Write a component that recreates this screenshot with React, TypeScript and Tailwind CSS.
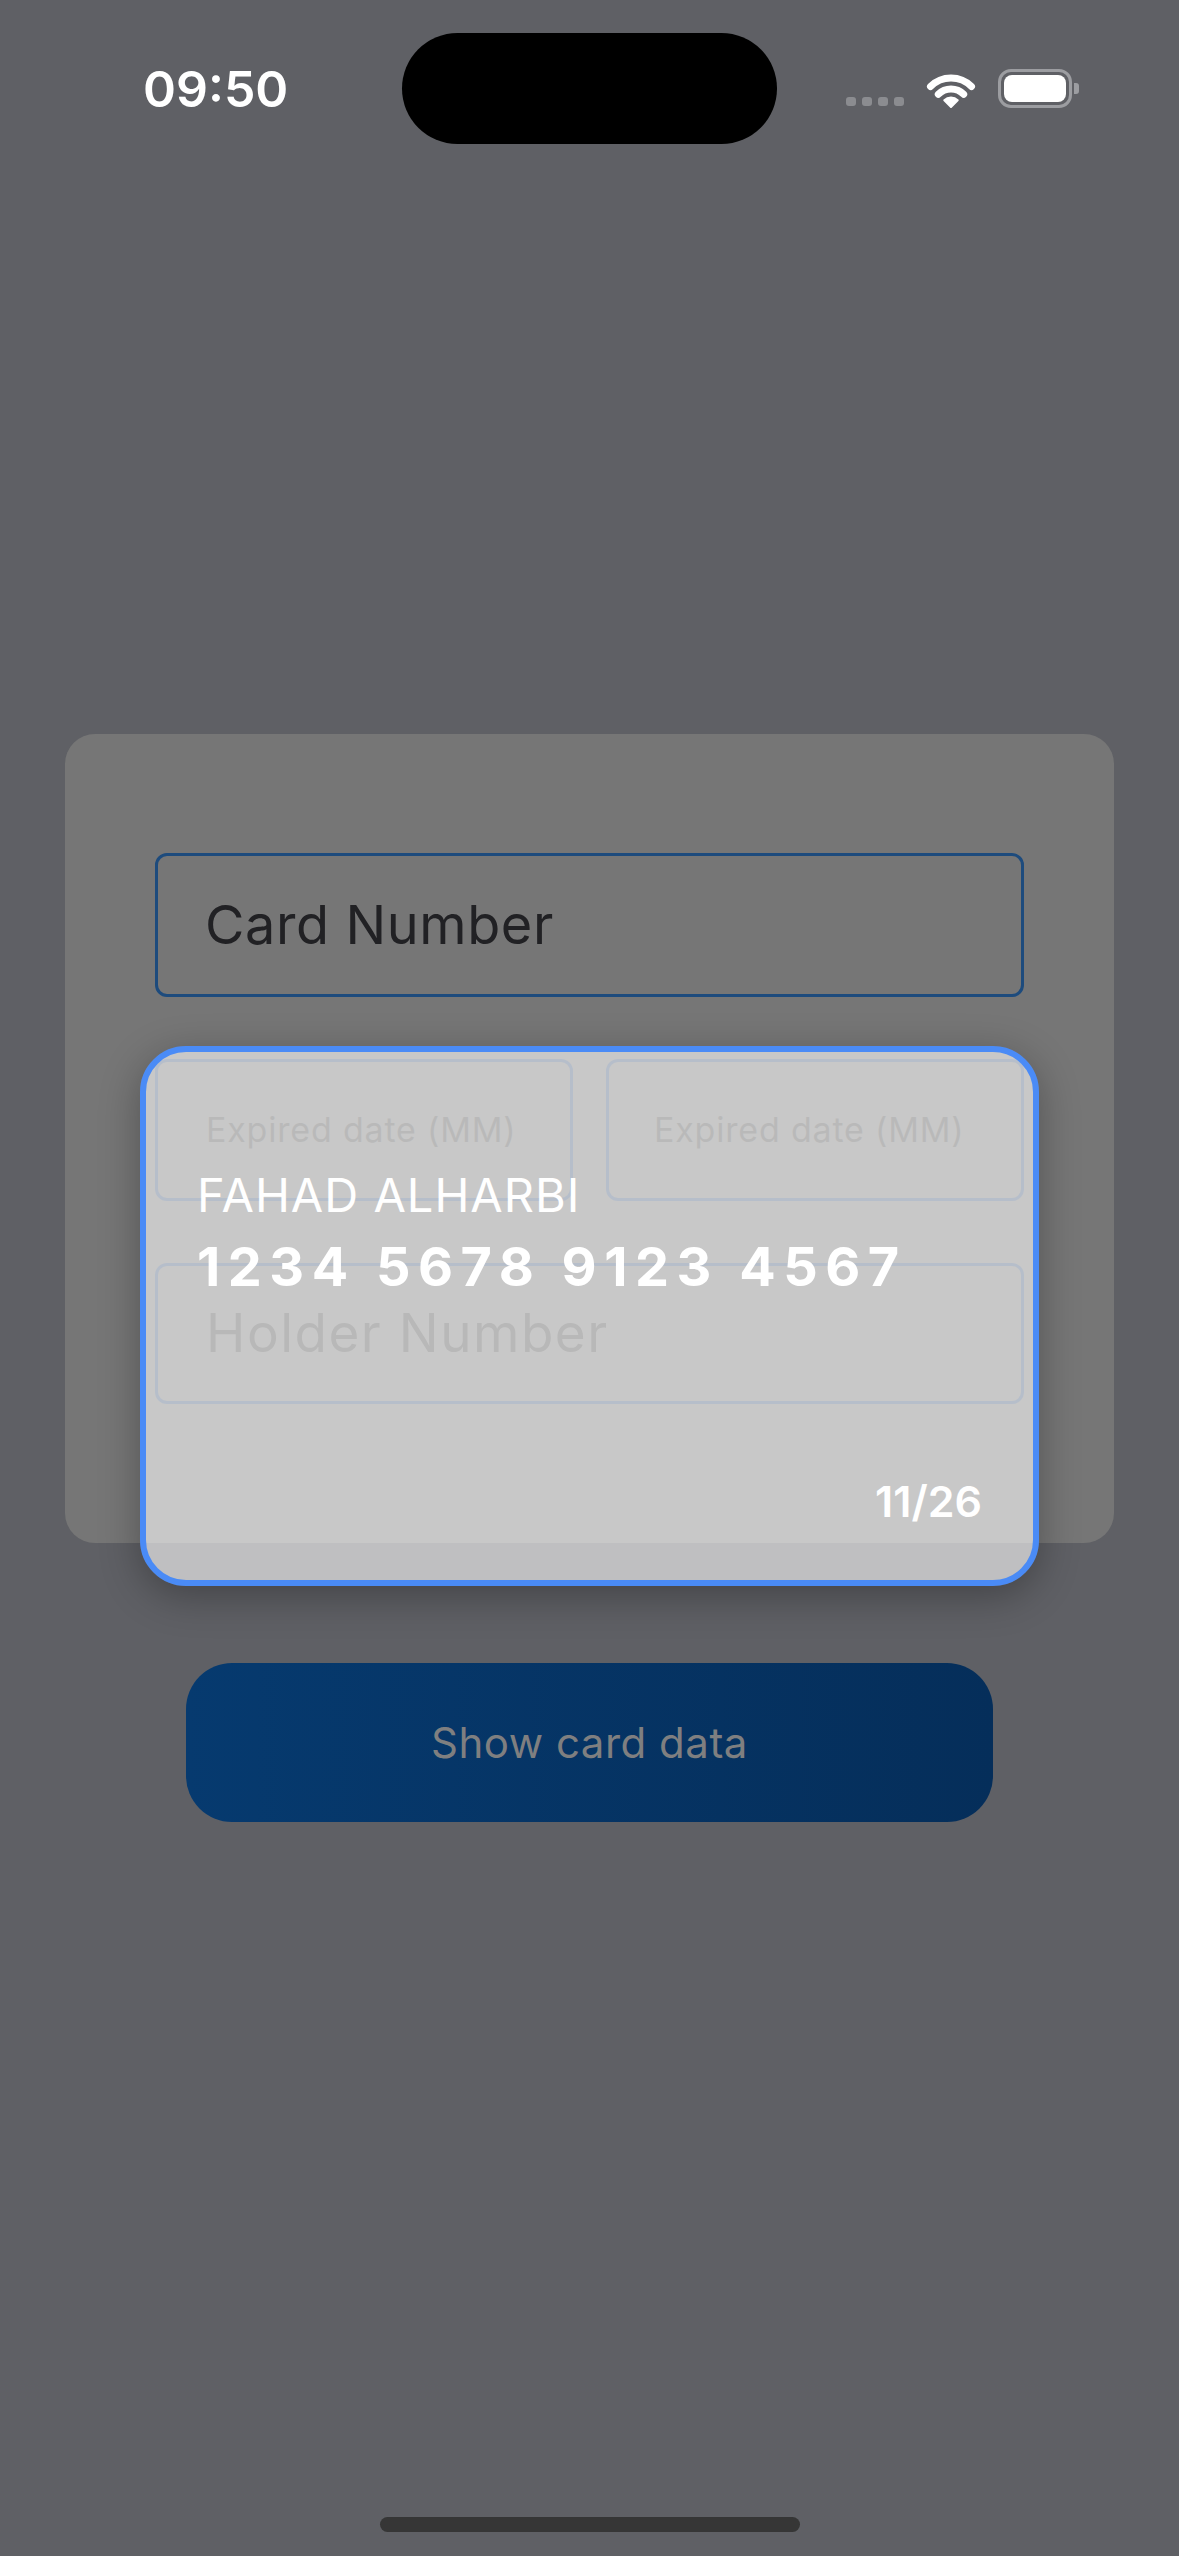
import React from 'react';

const font = { fontFamily: 'Inter, "Noto Sans", sans-serif' };

function WifiIcon() {
  // three rings + fan, drawn around the bottom point
  return (
    <svg width="50" height="36" viewBox="0 0 50 36" fill="none">
      <path d="M4.5 14.5 A29 29 0 0 1 45.5 14.5" stroke="white" strokeWidth="7" strokeLinecap="round" />
      <path d="M12.3 22.3 A18 18 0 0 1 37.7 22.3" stroke="white" strokeWidth="7" strokeLinecap="round" />
      <path d="M25 35 L18.3 28.3 A9.5 9.5 0 0 1 31.7 28.3 Z" fill="white" stroke="white" strokeWidth="2" strokeLinejoin="round" />
    </svg>
  );
}

function StatusBar() {
  return (
    <div className="flex items-center h-[111px] mt-[33px]">
      <div className="w-[402px] pl-[143px]">
        <span className="text-[50px] leading-[50px] font-semibold text-white" style={font}>
          09:50
        </span>
      </div>
      <div className="w-[375px] h-[111px] rounded-full bg-black" />
      <div className="flex-1 h-[39px] flex items-end pl-[69px]">
        <div className="flex gap-[6px] mb-[2px]">
          <div className="w-[10px] h-[9px] rounded-[3px] bg-[#8b8c90]" />
          <div className="w-[10px] h-[9px] rounded-[3px] bg-[#8b8c90]" />
          <div className="w-[10px] h-[9px] rounded-[3px] bg-[#8b8c90]" />
          <div className="w-[10px] h-[9px] rounded-[3px] bg-[#8b8c90]" />
        </div>
        <div className="ml-[22px]">
          <WifiIcon />
        </div>
        <div className="ml-[22px] flex items-center">
          <div className="w-[74px] h-[39px] rounded-[13px] border-[3px] border-[#9c9da1] p-[3px]">
            <div className="w-full h-full rounded-[8px] bg-white" />
          </div>
          <div className="w-[5px] h-[11px] ml-[2px] rounded-r-[3px] bg-[#9c9da1]" />
        </div>
      </div>
    </div>
  );
}

function Field({ label, className, textClass }: { label: string; className: string; textClass: string }) {
  return (
    <div className={`flex items-center rounded-[12px] ${className}`}>
      <span className={textClass} style={font}>
        {label}
      </span>
    </div>
  );
}

function CardPreview() {
  return (
    <div className="absolute left-[75px] top-[312px] w-[899px] h-[540px] rounded-[46px] border-[6px] border-[#4a8bf6] bg-white/60 shadow-[0_10px_40px_rgba(0,0,0,0.3)] flex flex-col pt-[119px] px-[51px] pb-[57px]" style={font}>
      <div className="text-[47px] leading-[47px] text-white tracking-[1px]">FAHAD ALHARBI</div>
      <div className="mt-[22px] text-[54px] leading-[54px] font-bold text-white tracking-[7.5px]">1234 5678 9123 4567</div>
      <div className="mt-auto self-end text-[43px] leading-[43px] font-semibold text-white">11/26</div>
    </div>
  );
}

export default function App() {
  return (
    <div className="w-[1179px] h-[2556px] bg-[#5f6065] flex flex-col overflow-hidden">
      <StatusBar />

      <div className="relative mx-[65px] mt-[590px] h-[809px] rounded-[30px] bg-[#767676] pt-[119px] px-[90px]">
        <Field
          label="Card Number"
          className="h-[144px] border-[3px] border-[#1d4b7d] pl-[47px]"
          textClass="text-[54px] leading-[54px] text-[#212124] tracking-[0.6px]"
        />
        <div className="grid grid-cols-2 gap-[33px] mt-[62px]">
          <Field
            label="Expired date (MM)"
            className="h-[142px] border-[3px] border-[#4a5e7c] pl-[48px]"
            textClass="text-[34px] leading-[34px] text-[#525252] tracking-[0.8px]"
          />
          <Field
            label="Expired date (MM)"
            className="h-[142px] border-[3px] border-[#4a5e7c] pl-[45px]"
            textClass="text-[34px] leading-[34px] text-[#525252] tracking-[0.8px]"
          />
        </div>
        <Field
          label="Holder Number"
          className="mt-[62px] h-[141px] border-[3px] border-[#4a5e7c] pl-[48px]"
          textClass="text-[53px] leading-[53px] text-[#4e4e4e] tracking-[1.5px]"
        />

        <CardPreview />
      </div>

      <button className="self-center mt-[120px] w-[807px] h-[159px] rounded-[46px] bg-linear-to-r from-[#063a6f] to-[#052e5a] text-[42px] tracking-[0.5px] text-[#7f7f80]" style={font}>
        Show card data
      </button>

      <div className="mt-auto mb-[24px] self-center w-[420px] h-[15px] rounded-full bg-[#363636]" />
    </div>
  );
}
